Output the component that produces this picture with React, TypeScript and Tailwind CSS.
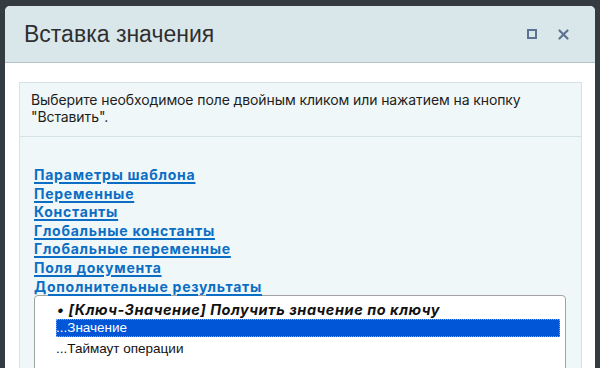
import React from 'react';

const links = [
  'Параметры шаблона',
  'Переменные',
  'Константы',
  'Глобальные константы',
  'Глобальные переменные',
  'Поля документа',
  'Дополнительные результаты',
];

export default function App() {
  return (
    <div className="w-[600px] h-[368px] overflow-hidden bg-[#343c41] pt-[6px] pl-[5px] pr-[5px] font-['Liberation_Sans',Arial,sans-serif]">
      <div className="w-[590px] h-[400px] bg-white rounded-t-[5px] overflow-hidden">
        {/* Header */}
        <div className="h-[57px] bg-[#d9e7eb] border-b border-[#b3c0c4] flex items-center pl-[19px] pr-[26px]">
          <span className="text-[23px] text-[#2f2f2f]">Вставка значения</span>
          <div className="ml-auto flex items-center gap-[21px]">
            <div className="w-[10px] h-[10px] border-[2px] border-[#5b7290] border-t-[2.5px]" />
            <svg width="11" height="11" viewBox="0 0 11 11">
              <path d="M1.5 1.5 L9.5 9.5 M9.5 1.5 L1.5 9.5" stroke="#5b7290" strokeWidth="2.2" strokeLinecap="round" />
            </svg>
          </div>
        </div>

        {/* Body */}
        <div className="pt-[19px] pl-[14px] pr-[13px]">
          <div className="border border-[#d5e3e7] bg-[#f0f7f8] h-[320px]">
            <div className="border-b border-[#d5e3e7] pl-[11px] pr-[10px] pt-[8px] h-[54px] font-['Inter',sans-serif] text-[14px] leading-[17px] tracking-[-0.1px] text-[#1e1e1e]">
              Выберите необходимое поле двойным кликом или нажатием на кнопку "Вставить".
            </div>
            <div className="pl-[14px] pr-[15px] pt-[29px]">
              <div className="flex flex-col items-start">
                {links.map(l => (
                  <a
                    key={l}
                    href="#"
                    className="font-['Inter',sans-serif] text-[14px] leading-[18.6px] font-bold tracking-[0.75px] text-[#0b6ec4] underline underline-offset-[2px] decoration-[1.5px]"
                  >
                    {l}
                  </a>
                ))}
              </div>
              <div className="-mt-[1px] border border-[#a3a3a3] rounded-t-[4px] bg-white h-[100px] pt-[5px] pl-[21px] pr-[5px] text-[13.5px] leading-[18px] text-[#111]">
                <div className="font-['Inter',sans-serif] text-[14.5px] font-bold italic pl-[1px] tracking-[0.55px]">• [Ключ-Значение] Получить значение по ключу</div>
                <div className="bg-[#0056d6] text-white outline-1 outline-dotted outline-[#7fa8ee] -outline-offset-1 h-[18px]">...Значение</div>
                <div className="mt-[3px]">...Таймаут операции</div>
              </div>
            </div>
          </div>
        </div>
      </div>
    </div>
  );
}
